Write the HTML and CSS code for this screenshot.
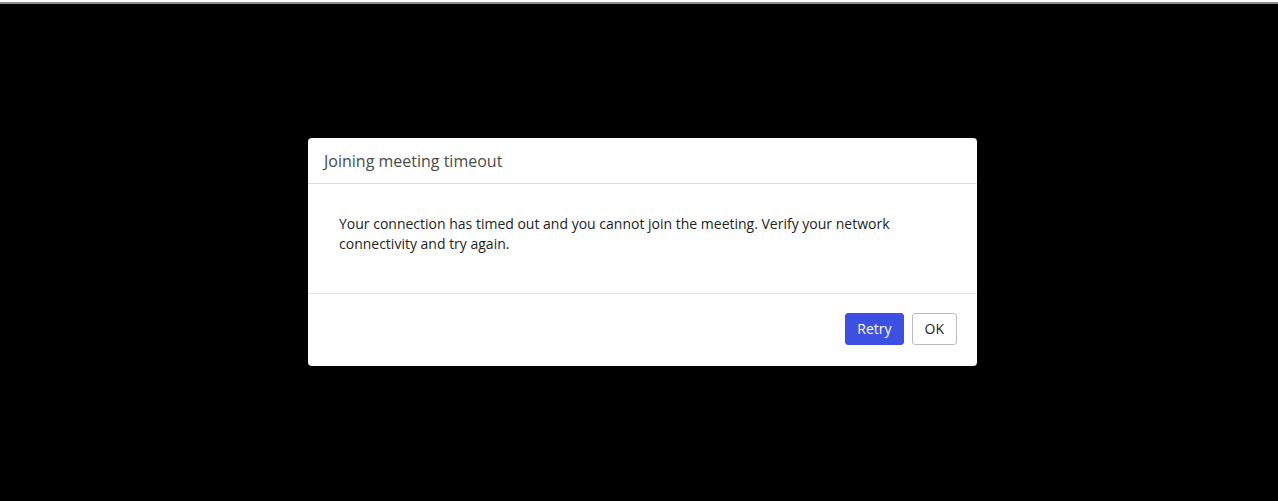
FILE: index.html
```html
<!DOCTYPE html>
<html lang="en">
<head>
<meta charset="utf-8">
<title>Joining meeting timeout</title>
<link rel="stylesheet" href="styles.css">
</head>
<body>
<div class="topbar"></div>
<main class="stage">
  <div class="dialog" role="dialog" aria-labelledby="dlg-title">
    <header class="dialog-header">
      <h1 id="dlg-title" class="dialog-title">Joining meeting timeout</h1>
    </header>
    <section class="dialog-body">
      <p class="dialog-text">Your connection has timed out and you cannot join the meeting. Verify your network connectivity and try again.</p>
    </section>
    <footer class="dialog-footer">
      <button class="btn btn-primary" type="button">Retry</button>
      <button class="btn btn-default" type="button">OK</button>
    </footer>
  </div>
</main>
</body>
</html>
```
FILE: styles.css
```css
* { box-sizing: border-box; }
html, body {
  margin: 0;
  padding: 0;
  height: 100%;
  background: #000;
  font-family: "Open Sans", "Liberation Sans", sans-serif;
}
.topbar {
  height: 4px;
  background: #fff;
  border-bottom: 2px solid #8c8c8c;
}
.stage {
  display: flex;
  justify-content: center;
  padding-top: 134px;
  padding-left: 7px;
}
.dialog {
  width: 669px;
  background: #fff;
  border-radius: 4px;
  overflow: hidden;
}
.dialog-header {
  height: 46px;
  padding: 13px 16px 11px;
  border-bottom: 1px solid #dcdcdc;
}
.dialog-title {
  margin: 0;
  font-size: 16px;
  font-weight: 400;
  line-height: 21px;
  color: #4a4a4a;
}
.dialog-body {
  padding: 30px 31px 39px;
  border-bottom: 1px solid #e2e2e2;
}
.dialog-text {
  margin: 0;
  font-size: 14px;
  line-height: 20px;
  color: #232323;
}
.dialog-footer {
  display: flex;
  justify-content: flex-end;
  gap: 8px;
  padding: 19px 20px 21px;
}
.btn {
  height: 32px;
  padding: 0 12px;
  font-family: inherit;
  font-size: 14px;
  line-height: 30px;
  border-radius: 3px;
  cursor: pointer;
}
.btn-primary {
  padding: 0 11px;
  background: #3c50e2;
  color: #fff;
  border: 1px solid #3c50e2;
}
.btn-default {
  background: #fff;
  color: #222;
  border: 1px solid #bdbdbd;
}
```
